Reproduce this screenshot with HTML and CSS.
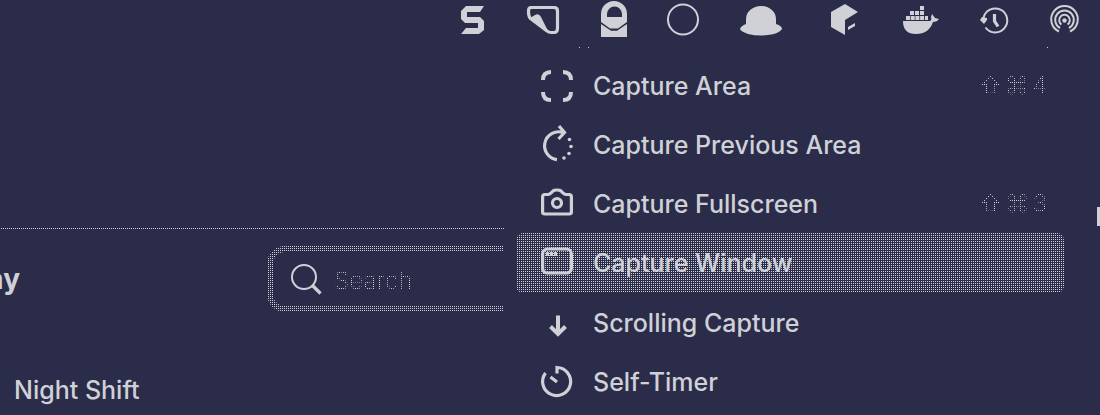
FILE: index.html
```html
<!DOCTYPE html>
<html lang="en">
<head>
<meta charset="utf-8">
<title>Capture menu</title>
<link rel="stylesheet" href="styles.css">
</head>
<body>
<header class="menubar">
  <button class="tray" aria-label="Shortcuts"><svg width="26" height="40" viewBox="461 0 26 40"><path d="M466 6H484L480 12H467V17H480L484 21V30L479 34H461L466 28H478V23H465L461 19V11Z"/></svg></button>
  <button class="tray" aria-label="Tag"><svg width="32" height="40" viewBox="527 0 32 40"><path class="line w3" d="M531 7.500H554Q557.500 7.500 557.500 11V28Q557.500 32.500 554 32.500H551Q549 32.500 547 31L530 18Q528.500 16 528.500 11Q528.500 7.500 531 7.500Z"/><path d="M530 18L535 15Q539 13 541 17L549 33Z"/></svg></button>
  <button class="tray" aria-label="Lock"><svg width="28" height="40" viewBox="599 0 28 40"><path fill-rule="evenodd" d="M601 14A13 13 0 0 1 627 14V22L618 28.500H610L601 22ZM607 17H622V14A7.500 7.500 0 0 0 607 14Z"/><path d="M601 24L611 30.800H617L627 24V37H601Z"/></svg></button>
  <button class="tray" aria-label="Circle"><svg width="31" height="40" viewBox="667 0 31 40"><circle class="line w2" cx="683" cy="19.500" r="15"/></svg></button>
  <button class="tray" aria-label="Hat"><svg width="51" height="40" viewBox="738 0 51 40"><path d="M746 24V19A15 13 0 0 1 776 19V24Q782 26 782 29Q780 32 774 34Q761 37 748 34Q740 31 740 29Q741 26 746 24Z"/></svg></button>
  <button class="tray" aria-label="Cube"><svg width="33" height="40" viewBox="829 0 33 40"><path d="M845 4L858 12L845 20V35L831 27V12ZM848 27L855 23V26L848 30Z"/></svg></button>
  <button class="tray" aria-label="Docker"><svg width="38" height="40" viewBox="902 0 38 40"><path d="M903 21H930Q932 20 931 17L932 14L935 18L939 19Q937 22 933 22Q929 34 916 34Q903 34 903 21ZM906 16h4v4h-4zM910.700 16h4v4h-4zM915.400 16h4v4h-4zM920.100 16h4v4h-4zM925 16h3v4h-3zM910 11h4v4h-4zM915 11h4v4h-4zM920 11h4v4h-4zM920 6h4v4h-4z"/></svg></button>
  <button class="tray" aria-label="Time Machine"><svg width="30" height="40" viewBox="980 0 30 40"><path class="line w2" d="M983.500 18A12 12 0 1 1 985.500 27.500"/><path class="line w3" d="M994.500 14V21L998 26.500"/><path d="M980 20L982 17L987 18V20L984 24Z"/></svg></button>
  <button class="tray" aria-label="AirDrop"><svg width="29" height="40" viewBox="1050 0 29 40"><path class="line w2" d="M1059 31.500A13.300 13.300 0 1 1 1070 31.500M1060 28A9.300 9.300 0 1 1 1069 28M1061.500 24.500A5.300 5.300 0 1 1 1067.500 24.500"/><circle cx="1064.500" cy="20.500" r="2.200"/></svg></button>
</header>
<div class="desktop">
  <section class="settings">
    <div class="search-row">
      <h1 class="heading">ay</h1>
      <label class="search">
        <span class="search-field">
          <svg width="32" height="32" viewBox="0 0 32 32"><path class="line w2" d="M26 14A12 12 0 1 1 2 14A12 12 0 1 1 26 14Z"/><path class="line w3" d="M22.500 22.500L30.500 30.500"/></svg>
          <input type="search" placeholder="Search" aria-label="Search">
        </span>
      </label>
    </div>
    <p class="setting">Night Shift</p>
  </section>
  <nav class="menu">
    <button class="item"><svg class="icon" width="32" height="32" viewBox="0 0 32 32"><path class="line w4" d="M2 10Q2 2 10 2M22 2Q30 2 30 10M30 22Q30 30 22 30M10 30Q2 30 2 22"/></svg><span>Capture Area</span><kbd class="keys"><span>⇧</span><span>⌘</span><span>4</span></kbd></button>
    <button class="item"><svg class="icon" width="32" height="32" viewBox="0 0 32 32"><path class="line w3" d="M16 30.700A14 14 0 1 1 22 3.500M18 -3L23.500 3.500L17.500 10"/><circle cx="28.500" cy="10.500" r="1.800"/><circle cx="30" cy="17.500" r="1.800"/><circle cx="28" cy="24.500" r="1.800"/><circle cx="23" cy="29" r="1.800"/></svg><span>Capture Previous Area</span></button>
    <button class="item"><svg class="icon" width="32" height="32" viewBox="0 0 32 32"><path class="line w3" d="M4 6.500H7Q9 6.500 12 3Q13 2 16 2T20 3Q23 6.500 25 6.500H28Q30.400 6.500 30.400 9V24Q30.400 26 28 26H4Q1.600 26 1.600 24V9Q1.600 6.500 4 6.500Z"/><circle class="line w3" cx="16" cy="15" r="4.500"/></svg><span>Capture Fullscreen</span><kbd class="keys"><span>⇧</span><span>⌘</span><span>3</span></kbd></button>
    <button class="item active"><svg class="icon" width="32" height="32" viewBox="0 0 32 32"><rect class="line w3" x="1.600" y="2" width="28.800" height="24" rx="5"/><path d="M5 5h3v4H5zM9 5h3v4H9zM13 5h3v4h-3z"/></svg><span>Capture Window</span></button>
    <button class="item"><svg class="icon" width="32" height="32" viewBox="0 0 32 32"><path class="line w4" d="M17 8.500V27M9.500 19.500L17 27L24.500 19.500"/></svg><span>Scrolling Capture</span></button>
    <button class="item"><svg class="icon" width="32" height="32" viewBox="0 0 32 32"><path class="line w3" d="M16 7.500V1.500A14 14 0 1 1 4.500 7M9.500 11L16 16"/></svg><span>Self-Timer</span></button>
  </nav>
</div>
<div class="edge"></div>
</body>
</html>
```
FILE: styles.css
```css
:root {
  --bg: #2a2c4a;
  --fg: #d0d1d7;
  --dots: conic-gradient(var(--fg) 25%, transparent 0);
}

* { box-sizing: border-box; }

body {
  margin: 0;
  min-height: 100vh;
  position: relative;
  overflow: hidden;
  background: var(--bg);
  color: var(--fg);
  font: 500 25px/32px Inter, "Liberation Sans", sans-serif;
}

button {
  border: 0;
  padding: 0;
  background: none;
  color: inherit;
  font: inherit;
  text-align: left;
}

svg {
  display: block;
  flex: none;
  overflow: visible;
  fill: var(--fg);
}

.line { fill: none; stroke: var(--fg); }
.w2 { stroke-width: 2; }
.w3 { stroke-width: 3.2; }
.w4 { stroke-width: 4; }

.menubar {
  display: flex;
  justify-content: flex-end;
  gap: 40px;
  height: 40px;
  padding-right: 21px;
}

.desktop {
  display: grid;
  grid-template-columns: minmax(0, 1fr) 596px;
}

.settings {
  padding-top: 188px;
}

.search-row {
  display: flex;
  align-items: center;
  justify-content: space-between;
  padding-top: 18px;
  background: var(--dots) 0 0 / 2px 2px repeat-x;
}

.heading {
  display: flex;
  justify-content: flex-end;
  width: 20px;
  margin: 0;
  overflow: hidden;
  font-size: 28px;
  font-weight: 700;
  line-height: 36px;
}

.search {
  width: 237px;
  padding: 6px 0 6px 6px;
  border-radius: 18px 0 0 18px;
  background: var(--dots) 0 0 / 2px 2px;
}

.search-field {
  display: flex;
  align-items: center;
  gap: 12px;
  height: 54px;
  padding-left: 17px;
  border-radius: 12px 0 0 12px;
  background: var(--bg);
}

.search input {
  flex: 1;
  min-width: 0;
  border: 0;
  padding: 4px 0 0;
  outline: 0;
  background: none;
  color: var(--fg);
  font: 300 24px/32px Inter, "Liberation Sans", sans-serif;
}

.search input::placeholder {
  opacity: 1;
  color: transparent;
  background: var(--dots) 0 0 / 2px 2px;
  background-clip: text;
}

.setting {
  margin: 0;
  padding: 62px 0 0 14px;
}

.menu {
  padding: 16px 36px 0 12px;
  background:
    linear-gradient(var(--fg), var(--fg)) 75px 7px / 1px 1px no-repeat,
    linear-gradient(var(--fg), var(--fg)) 84px 7px / 1px 1px no-repeat,
    linear-gradient(var(--fg), var(--fg)) 543px 7px / 1px 1px no-repeat;
}

.item {
  display: flex;
  align-items: center;
  gap: 20px;
  width: 100%;
  height: 59px;
  padding: 0 17px 0 25px;
  border-radius: 7px;
}

.active {
  height: 60px;
  background: var(--dots) 0 0 / 2px 2px;
}

.keys {
  display: flex;
  gap: 3px;
  margin-left: auto;
  font: 300 24px/32px Inter, "DejaVu Sans", sans-serif;
  color: transparent;
  background: var(--dots) 0 0 / 2px 2px;
  background-clip: text;
}

.edge {
  position: absolute;
  top: 207px;
  right: 0;
  width: 3px;
  height: 19px;
  background: var(--fg);
}
```
